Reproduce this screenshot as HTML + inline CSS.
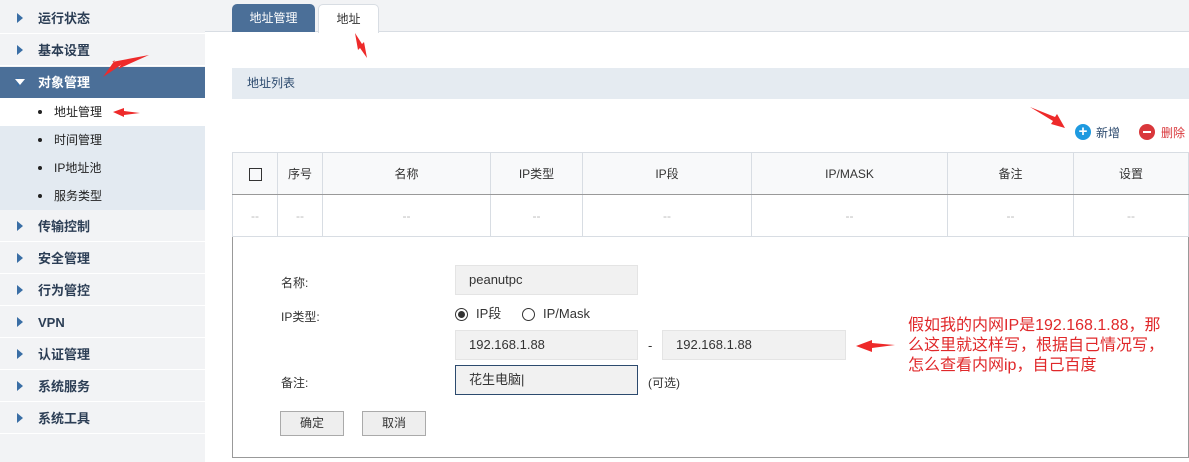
<!DOCTYPE html>
<html><head><meta charset="utf-8"><style>
*{margin:0;padding:0;box-sizing:border-box}
body{width:1189px;height:462px;overflow:hidden;position:relative;background:#fff;font-family:"Liberation Sans","Noto Sans CJK SC",sans-serif;font-size:13px;color:#333}
.a{position:absolute}
.side{left:0;top:0;width:205px;height:462px;background:#f2f3f5}
.it{position:absolute;left:0;width:205px;height:31px;background:#f2f3f5;border-bottom:1px solid #fff;font-weight:bold;font-size:13px;color:#2c3e55;line-height:31px;padding-left:38px}
.it:before{content:"";position:absolute;left:17px;top:10px;border-left:6px solid #3a6ea5;border-top:5px solid transparent;border-bottom:5px solid transparent}
.sub{position:absolute;left:0;width:205px;height:28px;background:#e3eaf1;line-height:28px;padding-left:54px;font-size:12px;color:#222}
.sub:before{content:"";position:absolute;left:38px;top:12px;width:4px;height:4px;border-radius:2px;background:#222}
.th,.td{position:absolute;text-align:center;border-right:1px solid #d8dde3;color:#333;font-size:12px}
.th{top:152px;height:42px;line-height:42px;background:#f8f9fa;border-top:1px solid #d8dde3}
.td{top:195px;height:42px;line-height:42px;color:#bbb;border-bottom:1px solid #d8dde3}
.inp{position:absolute;background:#f1f1f1;border:1px solid #e4e4e4;height:30px;line-height:28px;padding-left:13px;font-size:13px}
.lbl{position:absolute;left:281px;font-size:12px}
.btn{position:absolute;top:411px;height:25px;width:64px;border:1px solid #aaa;background:#eee;text-align:center;line-height:23px;font-size:12px}
.red{color:#e0282a;font-size:16px;line-height:20px}
</style></head><body>
<div class="a side"></div>
<div class="it" style="top:3px">运行状态</div>
<div class="it" style="top:35px">基本设置</div>
<div class="it" style="top:67px;height:31px;background:#4b6f98;color:#fff;border:0">对象管理</div>
<div style="position:absolute;left:15px;top:79px;border-top:6px solid #fff;border-left:5px solid transparent;border-right:5px solid transparent"></div>
<div class="sub" style="top:98px;background:#fff">地址管理</div>
<div class="sub" style="top:126px">时间管理</div>
<div class="sub" style="top:154px">IP地址池</div>
<div class="sub" style="top:182px">服务类型</div>
<div class="it" style="top:211px">传输控制</div>
<div class="it" style="top:243px">安全管理</div>
<div class="it" style="top:275px">行为管控</div>
<div class="it" style="top:307px">VPN</div>
<div class="it" style="top:339px">认证管理</div>
<div class="it" style="top:371px">系统服务</div>
<div class="it" style="top:403px">系统工具</div>

<div class="a" style="left:205px;top:0;width:984px;height:32px;background:#f2f3f5;border-bottom:1px solid #d8dde3"></div>
<div class="a" style="left:232px;top:4px;width:83px;height:28px;background:#4b6f98;border-radius:5px 5px 0 0;color:#fff;text-align:center;line-height:28px;font-size:12px">地址管理</div>
<div class="a" style="left:318px;top:4px;width:61px;height:29px;background:#fff;border:1px solid #d8dde3;border-bottom:0;border-radius:5px 5px 0 0;text-align:center;line-height:28px;font-size:12px">地址</div>

<div class="a" style="left:232px;top:68px;width:957px;height:31px;background:#e5ebf1;line-height:31px;padding-left:15px;font-size:12px;color:#2c4a6e">地址列表</div>

<div class="a" style="left:1075px;top:124px;width:16px;height:16px;border-radius:8px;background:#1e9ae0;color:#fff;font-weight:bold;text-align:center;line-height:16px;font-size:15px">+</div>
<div class="a" style="left:1096px;top:124px;font-size:12px;color:#2c4a6e">新增</div>
<div class="a" style="left:1139px;top:124px;width:16px;height:16px;border-radius:8px;background:#d9373b"><div style="margin:7px 4px;height:2px;background:#fff"></div></div>
<div class="a" style="left:1161px;top:124px;font-size:12px;color:#d9373b">删除</div>

<div class="a" style="left:232px;top:152px;width:957px;height:306px;border-left:1px solid #999;border-right:1px solid #999;border-bottom:1px solid #999"></div>
<div class="th" style="left:232px;width:46px;border-left:1px solid #d8dde3"><span style="display:inline-block;width:13px;height:13px;border:1px solid #333;vertical-align:middle"></span></div>
<div class="th" style="left:278px;width:45px">序号</div>
<div class="th" style="left:323px;width:168px">名称</div>
<div class="th" style="left:491px;width:92px">IP类型</div>
<div class="th" style="left:583px;width:169px">IP段</div>
<div class="th" style="left:752px;width:196px">IP/MASK</div>
<div class="th" style="left:948px;width:126px">备注</div>
<div class="th" style="left:1074px;width:115px">设置</div>
<div class="a" style="left:232px;top:194px;width:957px;height:1px;background:#999"></div>
<div class="td" style="left:232px;width:46px;border-left:1px solid #d8dde3">--</div>
<div class="td" style="left:278px;width:45px">--</div>
<div class="td" style="left:323px;width:168px">--</div>
<div class="td" style="left:491px;width:92px">--</div>
<div class="td" style="left:583px;width:169px">--</div>
<div class="td" style="left:752px;width:196px">--</div>
<div class="td" style="left:948px;width:126px">--</div>
<div class="td" style="left:1074px;width:115px">--</div>

<div class="lbl" style="top:274px">名称:</div>
<div class="inp" style="left:455px;top:265px;width:183px">peanutpc</div>
<div class="lbl" style="top:308px">IP类型:</div>
<div class="a" style="left:455px;top:308px;width:13px;height:13px;border:1px solid #333;border-radius:7px"><div style="margin:2px;width:7px;height:7px;border-radius:4px;background:#333"></div></div>
<div class="a" style="left:476px;top:306px;font-size:13px;line-height:16px">IP段</div>
<div class="a" style="left:522px;top:308px;width:13px;height:13px;border:1px solid #333;border-radius:7px"></div>
<div class="a" style="left:543px;top:306px;font-size:13px;line-height:16px">IP/Mask</div>
<div class="inp" style="left:455px;top:330px;width:183px">192.168.1.88</div>
<div class="a" style="left:648px;top:338px">-</div>
<div class="inp" style="left:662px;top:330px;width:184px">192.168.1.88</div>
<div class="lbl" style="top:374px">备注:</div>
<div class="inp" style="left:455px;top:365px;width:183px;border:1px solid #2c4a6e">花生电脑|</div>
<div class="a" style="left:648px;top:374px;font-size:12px">(可选)</div>
<div class="btn" style="left:280px">确定</div>
<div class="btn" style="left:362px">取消</div>

<div class="a red" style="left:908px;top:316px">假如我的内网IP是192.168.1.88，那<br>么这里就这样写，根据自己情况写，<br>怎么查看内网ip，自己百度</div>

<svg class="a" style="left:0;top:0" width="1189" height="462">
<g fill="#ee2a2a">
<polygon points="149,55 118,69 121,65 103,77 115,60 112,62"/>
<polygon points="113,112 124,108 124,111 140,113 124,115 124,117"/>
<polygon points="367,58 360,48 358,50 355,33 362,44 364,42"/>
<polygon points="1030,107 1055,117 1057,114 1065,128 1051,124 1053,121"/>
<polygon points="856,346 872,340 872,343 895,345 872,348 872,352"/>
</g></svg>
</body></html>
